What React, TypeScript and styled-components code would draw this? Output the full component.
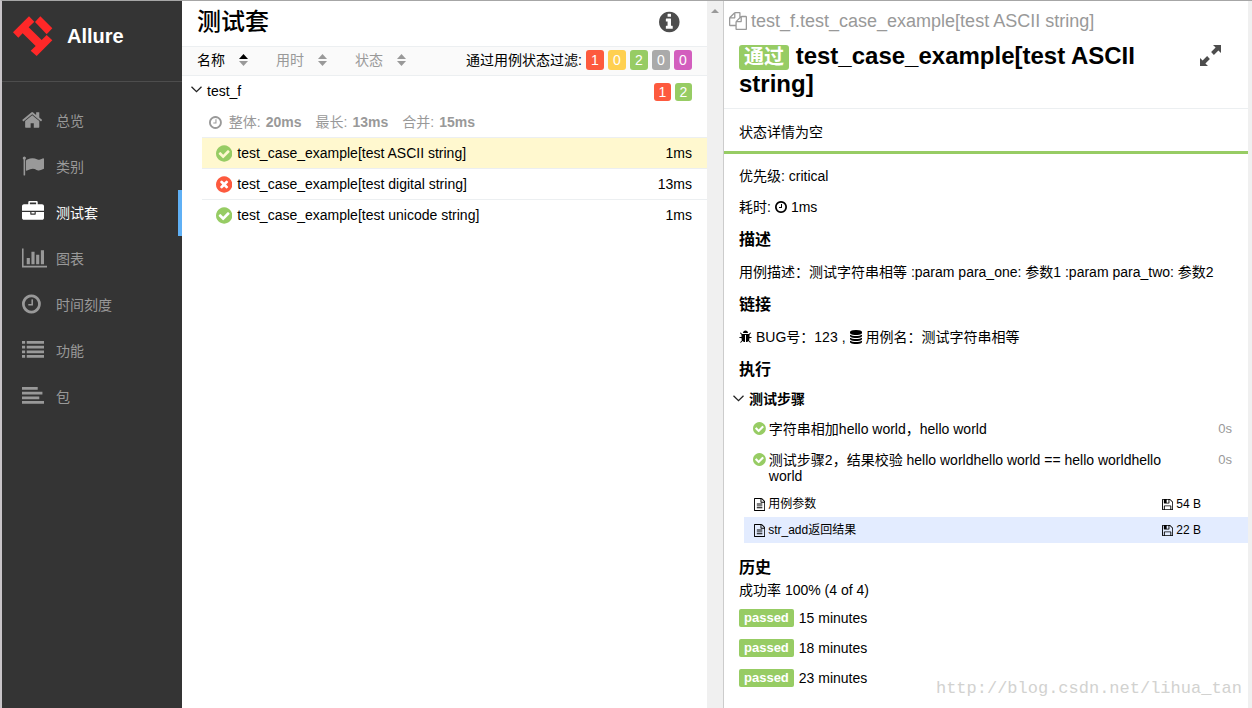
import React from "react";
import styled, { createGlobalStyle } from "styled-components";

const GlobalStyle = createGlobalStyle`
  *, *::before, *::after { box-sizing: border-box; }
  body {
    margin: 0;
    background: #fff;
    color: #000;
    font: 14px/16px "Liberation Sans", Arial, "Noto Sans CJK SC", sans-serif;
  }
  h1, h2, h3, h4, p, ul, dl, dd { margin: 0; padding: 0; font-size: inherit; }
  ul { list-style: none; }
  a { color: inherit; text-decoration: none; }
  button { margin: 0; padding: 0; border: 0; background: none; font: inherit; color: inherit; cursor: pointer; }
`;

/* ---------- icons ---------- */

const icons = {
  home: {
    box: "64 0 1664 1792",
    d: "M1472 992v480q0 26-19 45t-45 19h-384v-384h-256v384h-384q-26 0-45-19t-19-45v-480q0-1 .5-3t.5-3l575-474 575 474q1 2 1 6zm223-69l-62 74q-8 9-21 11h-3q-13 0-21-7l-692-577-692 577q-12 8-24 7-13-2-21-11l-62-74q-8-10-7-23.5t11-21.5l719-599q32-26 76-26t76 26l244 204v-195q0-14 9-23t23-9h192q14 0 23 9t9 23v408l219 182q10 8 11 21.5t-7 23.5z",
  },
  flag: {
    box: "0 0 1792 1792",
    d: "M320 256q0 72-64 110v1266q0 13-9.5 22.5t-22.5 9.5h-64q-13 0-22.5-9.5t-9.5-22.5v-1266q-64-38-64-110 0-53 37.5-90.5t90.5-37.5 90.5 37.5 37.5 90.5zm1472 64v763q0 25-12.5 38.5t-39.5 27.5q-215 116-369 116-61 0-123.5-22t-108.5-48-115.5-48-142.5-22q-192 0-464 146-17 9-33 9-26 0-45-19t-19-45v-742q0-32 31-55 21-14 79-43 236-120 421-120 107 0 200 29t219 88q38 19 88 19 54 0 117.5-21t110-47 88-47 54.5-21q26 0 45 19t19 45z",
  },
  briefcase: {
    box: "0 0 1792 1792",
    d: "M640 256h512v-128h-512v128zm1152 640v480q0 66-47 113t-113 47h-1472q-66 0-113-47t-47-113v-480h672v160q0 26 19 45t45 19h320q26 0 45-19t19-45v-160h672zm-768 0v128h-256v-128h256zm768-480v384h-1792v-384q0-66 47-113t113-47h352v-160q0-40 28-68t68-28h576q40 0 68 28t28 68v160h352q66 0 113 47t47 113z",
  },
  chart: {
    box: "0 0 2048 1792",
    d: "M640 896v512h-256v-512h256zm384-512v1024h-256v-1024h256zm1024 1152v128h-2048v-1536h128v1408h1920zm-640-896v768h-256v-768h256zm384-384v1152h-256v-1152h256z",
  },
  clock: {
    box: "128 0 1536 1792",
    d: "M1024 544v448q0 14-9 23t-23 9h-320q-14 0-23-9t-9-23v-64q0-14 9-23t23-9h224v-352q0-14 9-23t23-9h64q14 0 23 9t9 23zm416 352q0-148-73-273t-198-198-273-73-273 73-198 198-73 273 73 273 198 198 273 73 273-73 198-198 73-273zm224 0q0 209-103 385.5t-279.5 279.5-385.5 103-385.5-103-279.5-279.5-103-385.5 103-385.5 279.5-279.5 385.5-103 385.5 103 279.5 279.5 103 385.5z",
  },
  list: {
    box: "0 0 1792 1792",
    d: "M0 1312h256v224h-256zM0 928h256v224h-256zM0 544h256v224h-256zM0 160h256v224h-256zM384 1312h1408v224h-1408zM384 928h1408v224h-1408zM384 544h1408v224h-1408zM384 160h1408v224h-1408z",
  },
  align: {
    box: "0 0 1792 1792",
    d: "M0 1312h1792v224h-1792zM0 928h1408v224h-1408zM0 544h1664v224h-1664zM0 160h1280v224h-1280z",
  },
  check: {
    box: "128 0 1536 1792",
    d: "M1412 734q0-28-18-46l-91-90q-19-19-45-19t-45 19l-408 407-226-226q-19-19-45-19t-45 19l-91 90q-18 18-18 46 0 27 18 45l362 362q19 19 45 19 27 0 46-19l543-543q18-18 18-45zm252 162q0 209-103 385.5t-279.5 279.5-385.5 103-385.5-103-279.5-279.5-103-385.5 103-385.5 279.5-279.5 385.5-103 385.5 103 279.5 279.5 103 385.5z",
  },
  times: {
    box: "128 0 1536 1792",
    d: "M1277 1122q0-26-19-45l-181-181 181-181q19-19 19-45 0-27-19-46l-90-90q-19-19-46-19-26 0-45 19l-181 181-181-181q-19-19-45-19-27 0-46 19l-90 90q-19 19-19 46 0 26 19 45l181 181-181 181q-19 19-19 45 0 27 19 46l90 90q19 19 46 19 26 0 45-19l181-181 181 181q19 19 45 19 27 0 46-19l90-90q19-19 19-46zm387-226q0 209-103 385.5t-279.5 279.5-385.5 103-385.5-103-279.5-279.5-103-385.5 103-385.5 279.5-279.5 385.5-103 385.5 103 279.5 279.5 103 385.5z",
  },
  info: {
    box: "128 0 1536 1792",
    d: "M1152 1376v-160q0-14-9-23t-23-9h-96v-512q0-14-9-23t-23-9h-320q-14 0-23 9t-9 23v160q0 14 9 23t23 9h96v320h-96q-14 0-23 9t-9 23v160q0 14 9 23t23 9h448q14 0 23-9t9-23zm-128-896v-160q0-14-9-23t-23-9h-192q-14 0-23 9t-9 23v160q0 14 9 23t23 9h192q14 0 23-9t9-23zm640 416q0 209-103 385.5t-279.5 279.5-385.5 103-385.5-103-279.5-279.5-103-385.5 103-385.5 279.5-279.5 385.5-103 385.5 103 279.5 279.5 103 385.5z",
  },
  files: {
    box: "0 0 1792 1792",
    d: "M1696 384q40 0 68 28t28 68v1216q0 40-28 68t-68 28h-960q-40 0-68-28t-28-68v-288h-544q-40 0-68-28t-28-68v-672q0-40 20-88t48-76l408-408q28-28 76-48t88-20h416q40 0 68 28t28 68v328q68-40 128-40h416zm-544 213l-299 299h299v-299zm-640-384l-299 299h299v-299zm196 647l316-316v-416h-384v416q0 40-28 68t-68 28h-416v640h512v-256q0-40 20-88t48-76zm956 804v-1152h-384v416q0 40-28 68t-68 28h-416v640h896z",
  },
  database: {
    box: "128 0 1536 1792",
    d: "M896 768q237 0 443-43t325-127v170q0 69-103 128t-280 93.5-385 34.5-385-34.5-280-93.5-103-128v-170q119 84 325 127t443 43zm0 768q237 0 443-43t325-127v170q0 69-103 128t-280 93.5-385 34.5-385-34.5-280-93.5-103-128v-170q119 84 325 127t443 43zm0-384q237 0 443-43t325-127v170q0 69-103 128t-280 93.5-385 34.5-385-34.5-280-93.5-103-128v-170q119 84 325 127t443 43zm0-1152q208 0 385 34.5t280 93.5 103 128v128q0 69-103 128t-280 93.5-385 34.5-385-34.5-280-93.5-103-128v-128q0-69 103-128t280-93.5 385-34.5z",
  },
  file: {
    box: "128 0 1536 1792",
    d: "M1596 380q28 28 48 76t20 88v1152q0 40-28 68t-68 28h-1344q-40 0-68-28t-28-68v-1600q0-40 28-68t68-28h896q40 0 88 20t76 48zm-444-244v376h376q-10-29-22-41l-313-313q-12-12-41-22zm384 1528v-1024h-416q-40 0-68-28t-28-68v-416h-768v1536h1280zm-1024-864q0-14 9-23t23-9h704q14 0 23 9t9 23v64q0 14-9 23t-23 9h-704q-14 0-23-9t-9-23v-64zm736 224q14 0 23 9t9 23v64q0 14-9 23t-23 9h-704q-14 0-23-9t-9-23v-64q0-14 9-23t23-9h704zm0 256q14 0 23 9t9 23v64q0 14-9 23t-23 9h-704q-14 0-23-9t-9-23v-64q0-14 9-23t23-9h704z",
  },
  floppy: {
    box: "128 0 1536 1792",
    d: "M512 1536h768v-384h-768v384zm896 0h128v-896q0-14-10-38.5t-20-34.5l-281-281q-10-10-34-20t-39-10v416q0 40-28 68t-68 28h-576q-40 0-68-28t-28-68v-416h-128v1280h128v-416q0-40 28-68t68-28h832q40 0 68 28t28 68v416zm-384-928v-320q0-13-9.5-22.5t-22.5-9.5h-192q-13 0-22.5 9.5t-9.5 22.5v320q0 13 9.5 22.5t22.5 9.5h192q13 0 22.5-9.5t9.5-22.5zm640 32v928q0 40-28 68t-68 28h-1344q-40 0-68-28t-28-68v-1344q0-40 28-68t68-28h928q40 0 88 20t76 48l280 280q28 28 48 76t20 88z",
  },
  bug: {
    box: "64 0 1664 1792",
    d: "M1696 960q0 26-19 45t-45 19h-224q0 171-67 290l208 209q19 19 19 45t-19 45q-18 19-45 19t-45-19l-198-197q-5 5-15 13t-42 28.5-65 36.5-82 29-97 13v-896h-128v896q-51 0-101.5-13.5t-87-33-66-39-43.5-32.5l-15-14-183 207q-20 21-48 21-24 0-43-16-19-18-20.5-44.5t15.5-46.5l202-227q-58-114-58-274h-224q-26 0-45-19t-19-45 19-45 45-19h224v-294l-173-173q-19-19-19-45t19-45 45-19 45 19l173 173h844l173-173q19-19 45-19t45 19 19 45-19 45l-173 173v294h224q26 0 45 19t19 45zm-480-576h-640q0-133 93.5-226.5t226.5-93.5 226.5 93.5 93.5 226.5z",
  },
} as const;

type IconName = keyof typeof icons;

const Svg = styled.svg<{ $size: number; $color?: string }>`
  display: block;
  flex: none;
  height: ${(p) => p.$size}px;
  fill: ${(p) => p.$color || "currentColor"};
`;

const Icon = ({ name, size = 14, color }: { name: IconName; size?: number; color?: string }) => (
  <Svg viewBox={icons[name].box} $size={size} $color={color} aria-hidden="true">
    <path d={icons[name].d} />
  </Svg>
);

const LogoSvg = styled.svg`
  width: 40px;
  height: 40px;
  flex: none;
  fill: #ff2828;
`;

const Logo = () => (
  <LogoSvg viewBox="13 18 120 120" aria-hidden="true">
    <path d="M13 67 61 19 77 35 60 52 99 90 114 75 131 91 84 138 66 122 81 108 42 70 29 83Z" />
    <path d="M79 36 95 19 131 55 114 73Z" />
  </LogoSvg>
);

const LineSvg = styled.svg`
  display: block;
  flex: none;
  width: 11px;
  height: 7px;
  margin-bottom: 2px;
  fill: none;
  stroke: #222;
  stroke-width: 1.3;
`;

const Chevron = () => (
  <LineSvg viewBox="0 0 11 7" aria-hidden="true">
    <path d="M.5 .8 5.5 5.6 10.5 .8" />
  </LineSvg>
);

const SortSvg = styled.svg`
  display: block;
  width: 9px;
  height: 12px;
`;

const SortArrows = ({ up }: { up: boolean }) => (
  <SortSvg viewBox="0 0 9 12" aria-hidden="true">
    <path d="M4.5 0 9 5H0Z" fill={up ? "#000" : "#999"} />
    <path d="M4.5 12 9 7H0Z" fill="#999" />
  </SortSvg>
);

const ExpandSvg = styled.svg`
  display: block;
  width: 21px;
  height: 21px;
  fill: #4d4d4d;
`;

const ExpandIcon = () => (
  <ExpandSvg viewBox="0 0 21 21" aria-hidden="true">
    <path d="M13 0H21V8L18.4 5.4 13.9 9.9 11.1 7.1 15.6 2.6Z" />
    <path d="M8 21H0V13L2.6 15.6 7.1 11.1 9.9 13.9 5.4 18.4Z" />
  </ExpandSvg>
);

/* ---------- colours ---------- */

const status = {
  failed: "#fd5a3e",
  broken: "#ffd050",
  passed: "#97cc64",
  skipped: "#aaaaaa",
  unknown: "#d35ebe",
};
type Status = keyof typeof status;

/* ---------- page ---------- */

const Page = styled.div`
  display: grid;
  grid-template-columns: 180px minmax(0, 542fr) minmax(0, 528fr);
  min-height: 100vh;
  border-top: 1px solid #a6a6a6;
  border-left: 2px solid #c8c4c8;
`;

/* ---------- side navigation ---------- */

const Side = styled.aside`
  background: #343434;
  color: #999;
`;

const Brand = styled.a`
  display: flex;
  align-items: center;
  gap: 14px;
  height: 81px;
  padding: 0 11px 10px;
  border-bottom: 1px solid #4d4d4d;
  color: #fff;
  font-size: 20px;
  font-weight: bold;
`;

const Nav = styled.nav`
  display: flex;
  flex-direction: column;
  padding-top: 16px;
`;

const NavLink = styled.a<{ $active: boolean }>`
  display: flex;
  align-items: center;
  height: 46px;
  padding-left: 20px;
  color: ${(p) => (p.$active ? "#fff" : "#999")};
  border-right: 4px solid ${(p) => (p.$active ? "#5fb0f5" : "transparent")};
`;

const NavIcon = styled.span`
  width: 34px;
  padding-bottom: 2px;
`;

/* ---------- suites column ---------- */

const Suites = styled.main`
  display: flex;
  border-right: 1px solid #ccc;
`;

const SuitesBody = styled.div`
  flex: 1;
  min-width: 0;
`;

const ScrollTrack = styled.div`
  width: 16px;
  padding-top: 8px;
  background: #f0f0f0;
`;

const ScrollArrow = styled.div`
  width: 8px;
  height: 4px;
  margin: 0 auto;
  background: #999;
  clip-path: polygon(50% 0, 100% 100%, 0 100%);
`;

const TitleBar = styled.header`
  display: flex;
  align-items: center;
  justify-content: space-between;
  height: 46px;
  padding: 0 27px 4px 15px;
  border-bottom: 1px solid #eceff1;
`;

const PageTitle = styled.h1`
  font-size: 24px;
  line-height: 28px;
  font-weight: 500;
`;

const SortBar = styled.div`
  display: flex;
  align-items: center;
  justify-content: space-between;
  height: 29px;
  padding: 0 15px 2px;
  background: #fafafa;
  border-bottom: 1px solid #eceff1;
`;

const Sorters = styled.div`
  display: flex;
  gap: 28px;
`;

const Sorter = styled.button<{ $active: boolean }>`
  display: flex;
  align-items: center;
  gap: 14px;
  color: ${(p) => (p.$active ? "#000" : "#999")};
`;

const Filters = styled.div`
  display: flex;
  align-items: center;
  gap: 4px;
`;

const countBox = `
  display: flex;
  align-items: center;
  justify-content: center;
  border-radius: 3px;
  color: #fff;
`;

const FilterButton = styled.button<{ $status: Status }>`
  ${countBox}
  width: 18px;
  height: 20px;
  background: ${(p) => status[p.$status]};
`;

const Count = styled.span<{ $status: Status }>`
  ${countBox}
  width: 17px;
  height: 18px;
  background: ${(p) => status[p.$status]};
`;

const GroupRow = styled.div`
  display: flex;
  align-items: center;
  gap: 4px;
  height: 31px;
  padding: 0 15px 0 9px;
`;

const GroupToggle = styled.button`
  display: flex;
  align-items: center;
  gap: 5px;
  margin-right: auto;
  padding-bottom: 2px;
`;

const Stats = styled.dl`
  display: flex;
  align-items: center;
  gap: 14px;
  height: 30px;
  padding-left: 27px;
  color: #999;
`;

const Stat = styled.div`
  display: flex;
  gap: 5px;

  dd { font-weight: bold; }
`;

const StatLead = styled.div`
  display: flex;
  align-items: center;
  gap: 7px;
`;

const CaseLink = styled.a<{ $selected?: boolean }>`
  display: flex;
  align-items: center;
  gap: 5px;
  height: 31px;
  margin-left: 20px;
  padding: 0 15px 0 14px;
  border-top: 1px solid #eceff1;
  background: ${(p) => (p.$selected ? "#fff8cf" : "transparent")};
`;

const CaseName = styled.span`
  flex: 1;
`;

/* ---------- case details ---------- */

const Details = styled.section`
  position: relative;
  border-right: 4px solid #f0f0f0;
`;

const Crumb = styled.a`
  display: flex;
  align-items: center;
  gap: 4px;
  height: 40px;
  padding-left: 5px;
  color: #999;
  font-size: 18px;
  line-height: 20px;
`;

const DetailsHead = styled.header`
  display: flex;
  align-items: flex-start;
  gap: 14px;
  height: 68px;
  padding: 1px 27px 0 15px;
  border-bottom: 1px solid #eceff1;
`;

const CaseTitle = styled.h2`
  flex: 1;
  font-size: 24px;
  line-height: 28px;
`;

const ExpandButton = styled.button`
  margin-top: 3px;
`;

const StatusLabel = styled.span`
  display: inline-block;
  height: 25px;
  margin-top: 3px;
  padding: 0 5px;
  border-radius: 3px;
  background: ${status.passed};
  color: #fff;
  font-size: 20px;
  line-height: 25px;
  vertical-align: top;
`;

const StatusNote = styled.p`
  padding: 15px 15px 10px;
  border-bottom: 3px solid ${status.passed};
  line-height: 17px;
`;

const Content = styled.div`
  padding: 6px 15px 8px;
`;

const Overview = styled.div`
  padding-bottom: 2px;
`;

const Line = styled.p`
  display: flex;
  align-items: center;
  gap: 4px;
  height: 31px;
  white-space: nowrap;
`;

const Heading = styled.h3`
  font-size: 16px;
  line-height: 32px;
`;

const TextRow = styled(Line)`
  height: 33px;
  padding-bottom: 2px;
`;

const ExtLink = styled.a`
  display: flex;
  align-items: center;
  gap: 4px;
`;

const StepsToggle = styled.button`
  display: flex;
  align-items: center;
  gap: 5px;
  height: 26px;
  margin: 0 0 1px -6px;
  font-weight: bold;
`;

const Step = styled.li`
  display: flex;
  align-items: flex-start;
  gap: 3px;
  padding: 8px 1px 7px 14px;
`;

const StepName = styled.span`
  flex: 1;
  padding-right: 40px;
`;

const Duration = styled.span`
  color: #999;
  font-size: 13px;
`;

const Attachment = styled.li<{ $selected?: boolean }>`
  display: flex;
  align-items: center;
  justify-content: space-between;
  height: 26px;
  margin: 0 -15px 0 5px;
  padding: 0 47px 0 10px;
  background: ${(p) => (p.$selected ? "#e3ecff" : "transparent")};
  font-size: 12px;
`;

const AttachmentLink = styled.a`
  display: flex;
  align-items: center;
  gap: 3px;
`;

const HistoryHeading = styled.h3`
  margin-top: 13px;
  font-size: 16px;
  line-height: 24px;
`;

const SuccessRate = styled.p`
  padding: 2px 0 5px;
`;

const HistoryRow = styled.li`
  display: flex;
  align-items: center;
  gap: 5px;
  height: 30px;
`;

const PassedLabel = styled.span`
  padding: 0 5px;
  border-radius: 2px;
  background: ${status.passed};
  color: #fff;
  font-size: 13px;
  line-height: 18px;
  font-weight: bold;
`;

const Watermark = styled.span`
  position: absolute;
  right: 6px;
  bottom: 8px;
  color: #d2d2d0;
  font: 17px/22px "Liberation Mono", monospace;
`;

/* ---------- data ---------- */

const navItems: { icon: IconName; label: string; active?: boolean }[] = [
  { icon: "home", label: "总览" },
  { icon: "flag", label: "类别" },
  { icon: "briefcase", label: "测试套", active: true },
  { icon: "chart", label: "图表" },
  { icon: "clock", label: "时间刻度" },
  { icon: "list", label: "功能" },
  { icon: "align", label: "包" },
];

const filters: [Status, number][] = [
  ["failed", 1],
  ["broken", 0],
  ["passed", 2],
  ["skipped", 0],
  ["unknown", 0],
];

const cases: { name: string; status: "passed" | "failed"; time: string; selected?: boolean }[] = [
  { name: "test_case_example[test ASCII string]", status: "passed", time: "1ms", selected: true },
  { name: "test_case_example[test digital string]", status: "failed", time: "13ms" },
  { name: "test_case_example[test unicode string]", status: "passed", time: "1ms" },
];

const steps = [
  "字符串相加hello world，hello world",
  "测试步骤2，结果校验 hello worldhello world == hello worldhello world",
];

const attachments = [
  { name: "用例参数", size: "54 B" },
  { name: "str_add返回结果", size: "22 B", selected: true },
];

const history = ["15 minutes", "18 minutes", "23 minutes"];

const stats = [
  ["最长:", "13ms"],
  ["合并:", "15ms"],
];

export default function App() {
  return (
    <>
      <GlobalStyle />
      <Page>
        <Side>
          <Brand href="#">
            <Logo />
            Allure
          </Brand>
          <Nav>
            {navItems.map((n) => (
              <NavLink key={n.label} href="#" $active={!!n.active}>
                <NavIcon>
                  <Icon name={n.icon} size={22} />
                </NavIcon>
                {n.label}
              </NavLink>
            ))}
          </Nav>
        </Side>

        <Suites>
          <SuitesBody>
            <TitleBar>
              <PageTitle>测试套</PageTitle>
              <button aria-label="信息">
                <Icon name="info" size={24} color="#4d4d4d" />
              </button>
            </TitleBar>
            <SortBar>
              <Sorters>
                {["名称", "用时", "状态"].map((s, i) => (
                  <Sorter key={s} $active={i === 0}>
                    {s}
                    <SortArrows up={i === 0} />
                  </Sorter>
                ))}
              </Sorters>
              <Filters>
                通过用例状态过滤:
                {filters.map(([s, n]) => (
                  <FilterButton key={s} $status={s}>
                    {n}
                  </FilterButton>
                ))}
              </Filters>
            </SortBar>
            <GroupRow>
              <GroupToggle>
                <Chevron />
                test_f
              </GroupToggle>
              <Count $status="failed">1</Count>
              <Count $status="passed">2</Count>
            </GroupRow>
            <Stats>
              <StatLead>
                <Icon name="clock" size={15} />
                <Stat>
                  <dt>整体:</dt>
                  <dd>20ms</dd>
                </Stat>
              </StatLead>
              {stats.map(([label, value]) => (
                <Stat key={label}>
                  <dt>{label}</dt>
                  <dd>{value}</dd>
                </Stat>
              ))}
            </Stats>
            {cases.map((c) => (
              <CaseLink key={c.name} href="#" $selected={c.selected}>
                <Icon name={c.status === "passed" ? "check" : "times"} size={19} color={status[c.status]} />
                <CaseName>{c.name}</CaseName>
                <span>{c.time}</span>
              </CaseLink>
            ))}
          </SuitesBody>
          <ScrollTrack>
            <ScrollArrow />
          </ScrollTrack>
        </Suites>

        <Details>
          <Crumb href="#">
            <Icon name="files" size={18} />
            test_f.test_case_example[test ASCII string]
          </Crumb>
          <DetailsHead>
            <CaseTitle>
              <StatusLabel>通过</StatusLabel> test_case_example[test ASCII string]
            </CaseTitle>
            <ExpandButton aria-label="展开">
              <ExpandIcon />
            </ExpandButton>
          </DetailsHead>
          <StatusNote>状态详情为空</StatusNote>
          <Content>
            <Overview>
              <Line>优先级: critical</Line>
              <Line>
                耗时: <Icon name="clock" size={14} /> 1ms
              </Line>
            </Overview>
            <Heading>描述</Heading>
            <TextRow>用例描述：测试字符串相等 :param para_one: 参数1 :param para_two: 参数2</TextRow>
            <Heading>链接</Heading>
            <TextRow>
              <ExtLink href="#">
                <Icon name="bug" size={14} />
                BUG号：123
              </ExtLink>
              ,
              <ExtLink href="#">
                <Icon name="database" size={14} />
                用例名：测试字符串相等
              </ExtLink>
            </TextRow>
            <Heading>执行</Heading>
            <StepsToggle>
              <Chevron />
              测试步骤
            </StepsToggle>
            <ul>
              {steps.map((s) => (
                <Step key={s}>
                  <Icon name="check" size={15} color={status.passed} />
                  <StepName>{s}</StepName>
                  <Duration>0s</Duration>
                </Step>
              ))}
              {attachments.map((a) => (
                <Attachment key={a.name} $selected={a.selected}>
                  <AttachmentLink href="#">
                    <Icon name="file" size={13} />
                    {a.name}
                  </AttachmentLink>
                  <AttachmentLink href="#">
                    <Icon name="floppy" size={13} />
                    {a.size}
                  </AttachmentLink>
                </Attachment>
              ))}
            </ul>
            <HistoryHeading>历史</HistoryHeading>
            <SuccessRate>成功率 100% (4 of 4)</SuccessRate>
            <ul>
              {history.map((h) => (
                <HistoryRow key={h}>
                  <PassedLabel>passed</PassedLabel>
                  {h}
                </HistoryRow>
              ))}
            </ul>
          </Content>
          <Watermark>http://blog.csdn.net/lihua_tan</Watermark>
        </Details>
      </Page>
    </>
  );
}
